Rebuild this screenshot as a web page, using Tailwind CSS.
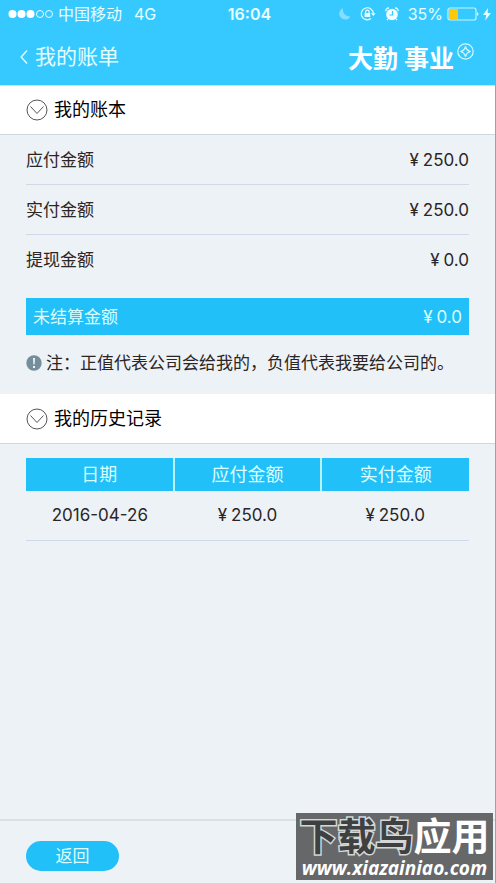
<!DOCTYPE html>
<html lang="zh-CN">
<head>
<meta charset="utf-8">
<meta name="viewport" content="width=device-width, initial-scale=1">
<title>我的账单</title>
<script src="https://cdn.jsdelivr.net/npm/@tailwindcss/browser@4"></script>
</head>
<body class="flex min-h-screen flex-col border-r border-[#9aa3a9] bg-[#edf2f6] font-[Inter,'Noto_Sans_CJK_SC',sans-serif] text-[17px] leading-6 text-[#2b2526]">
<header class="border-b border-[#c3e6f5] bg-[#36c9ff] text-[#e6ffff]">
  <div class="flex h-7 items-center justify-between pr-1 pl-2 text-base">
    <div class="flex flex-1 items-center whitespace-nowrap">
      <svg class="mr-1 h-3 w-[46px] shrink-0" viewBox="0 0 46 12" fill="none" stroke="#e6ffff" aria-label="信号">
        <g fill="#fff" stroke="none"><circle cx="4.500" cy="6" r="4"/><circle cx="13.500" cy="6" r="4"/><circle cx="22.500" cy="6" r="4"/></g>
        <circle cx="32" cy="6" r="3.500"/><circle cx="41" cy="6" r="3.500"/>
      </svg>
      <span>中国移动</span><span class="ml-3">4G</span>
    </div>
    <time class="text-center font-semibold">16:04</time>
    <div class="flex flex-1 items-center justify-end gap-1 whitespace-nowrap">
      <svg class="mr-1 h-4 w-4 shrink-0" viewBox="0 0 16 16" fill="#84deff"><path d="M7 2A6 6 0 1 0 14.500 10.500A7 7 0 0 1 7 2Z"/></svg>
      <svg class="mr-1 h-4 w-4 shrink-0" viewBox="0 0 16 16" fill="none" stroke="#e6ffff" stroke-width="1.200"><path d="M11 12.500A6 6 0 1 1 13.300 7.500"/><path d="M11 7.300h4.600l-2.300 2.800Z" fill="#e6ffff" stroke="none"/><path d="M4.600 7h5.600v4H4.600Z" fill="#e6ffff" stroke="none"/><path d="M5.700 7V5.800a1.700 1.700 0 0 1 3.400 0V7"/></svg>
      <svg class="mr-1 h-4 w-4 shrink-0" viewBox="0 0 16 16"><circle cx="8" cy="8.500" r="5.800" fill="#f0ffff"/><path d="M1.800 5.200A3 3 0 0 1 5 2M11 2a3 3 0 0 1 3.200 3.200M4 13l-1 1.200M12 13l1 1.200" fill="none" stroke="#e6ffff" stroke-width="1.300"/><path d="M8.500 5v4H5.500" fill="none" stroke="#36c9ff" stroke-width="1.200"/></svg>
      <span>35%</span>
      <svg class="h-4 w-8 shrink-0" viewBox="0 0 32 16"><rect x="1" y="2" width="28" height="12" rx="2" fill="none" stroke="#c6f5ff" stroke-width="1.200"/><path d="M2 3h9v10h-9Z" fill="#ffc80a"/><path d="M30 6q3 2 0 4Z" fill="#e6ffff"/></svg>
      <svg class="h-4 w-2 shrink-0" viewBox="0 0 8 16" fill="#e6ffff"><path d="M5 2L0 9h3.200L2.200 14.500L8 7H4.600Z"/></svg>
    </div>
  </div>
  <nav class="flex h-[57px] items-center justify-between pr-[21px] pl-5">
    <a href="#" class="flex items-center gap-[7px] text-[21px]">
      <svg class="h-4 w-2" viewBox="0 0 8 16" fill="none" stroke="#d9fbff" stroke-width="1.500"><path d="M7 1.500L1.200 8L7 14.500"/></svg>
      <span>我的账单</span>
    </a>
    <div class="flex items-start gap-[3px] text-white">
      <span class="pt-1 text-[25px] font-bold">大勤 事业</span>
      <svg class="h-[17px] w-[17px]" viewBox="0 0 17 17" fill="none" stroke="#d9fbff" stroke-width="1.200"><circle cx="8.500" cy="8.500" r="7.700"/><path d="M8.500 3.500q1 4 5 5q-4 1-5 5q-1-4-5-5q4-1 5-5Z"/></svg>
    </div>
  </nav>
</header>

<main class="flex-1">
  <section>
    <h2 class="flex h-[49px] items-center gap-[6px] border-b border-[#ccd8e2] bg-white px-[26px] text-[18px] text-black">
      <svg class="h-[22px] w-[22px]" viewBox="0 0 22 22" fill="none" stroke="#555" stroke-width="1"><circle cx="11" cy="11" r="10"/><path d="M4.500 7.500L11 14.500L17.500 7.500"/></svg>
      我的账本
    </h2>
    <div class="px-[26px] pb-[19px]">
      <dl>
        <div class="flex h-[50px] items-center justify-between border-b border-[#cfd9e9]"><dt>应付金额</dt><dd class="flex gap-1"><span>¥</span>250.0</dd></div>
        <div class="flex h-[50px] items-center justify-between border-b border-[#cfd9e9]"><dt>实付金额</dt><dd class="flex gap-1"><span>¥</span>250.0</dd></div>
        <div class="flex h-[50px] items-center justify-between"><dt>提现金额</dt><dd class="flex gap-1"><span>¥</span>0.0</dd></div>
        <div class="mt-[13px] flex h-[37px] items-center justify-between bg-[#22c0f8] px-[7px] text-[#dcffff]"><dt>未结算金额</dt><dd class="flex gap-1"><span>¥</span>0.0</dd></div>
      </dl>
      <p class="mt-4 flex items-center gap-1 whitespace-nowrap">
        <svg class="h-4 w-4" viewBox="0 0 16 16"><circle cx="8" cy="8" r="7.700" fill="#748e9c"/><path d="M7 3h2l-.4 6.500H7.400ZM7 11h2v2H7Z" fill="#edf5f7"/></svg>
        <span>注：正值代表公司会给我的，负值代表我要给公司的。</span>
      </p>
    </div>
  </section>

  <section>
    <h2 class="flex h-[50px] items-center gap-[6px] border-b border-[#ccd8e2] bg-white px-[26px] text-[18px] text-black">
      <svg class="h-[22px] w-[22px]" viewBox="0 0 22 22" fill="none" stroke="#555" stroke-width="1"><circle cx="11" cy="11" r="10"/><path d="M4.500 7.500L11 14.500L17.500 7.500"/></svg>
      我的历史记录
    </h2>
    <div class="px-[26px] pt-[14px]">
      <table class="w-full table-fixed text-center">
        <thead>
          <tr class="h-[33px] bg-[#22c0f8] text-[18px] text-[#dcffff]">
            <th scope="col" class="border-r-2 border-[#b5f4fa] font-normal">日期</th>
            <th scope="col" class="border-r-2 border-[#b5f4fa] font-normal">应付金额</th>
            <th scope="col" class="font-normal">实付金额</th>
          </tr>
        </thead>
        <tbody>
          <tr class="h-[49px] border-b border-[#cfd9e9]">
            <td>2016-04-26</td>
            <td><span class="mr-1">¥</span>250.0</td>
            <td><span class="mr-1">¥</span>250.0</td>
          </tr>
        </tbody>
      </table>
    </div>
  </section>
</main>

<footer class="relative flex h-16 items-center border-t-2 border-[#d7e2e7] px-[26px] pt-2">
  <button type="button" class="h-[30px] w-[93px] rounded-full bg-[#22c0f8] text-[17px] text-[#dcffff]">返回</button>
  <div class="absolute right-[2px] bottom-[3px] flex h-[67px] w-[197px] flex-col items-center bg-[#666768] whitespace-nowrap">
    <p class="text-[38px] leading-[46px] font-bold text-white"><span class="text-[#3e4041] [-webkit-text-stroke:3px_#d5d7d7] [paint-order:stroke_fill]">下载鸟</span>应用</p>
    <p class="font-['Open_Sans'] text-[19px] leading-[18px] font-bold text-white italic">www.xiazainiao.com</p>
  </div>
</footer>
</body>
</html>
